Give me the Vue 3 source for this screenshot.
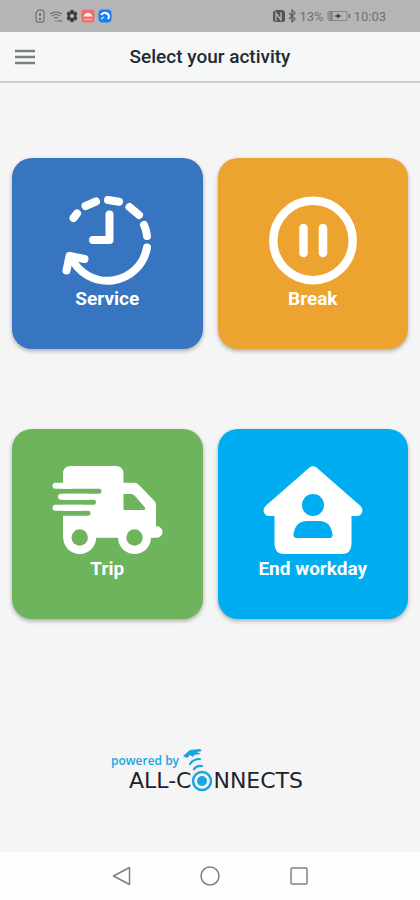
<template>
  <div class="screen">
    <div class="status-bar">
      <div class="status-group">
        <svg class="status-icon" viewBox="0 0 12 14" fill="none" stroke="#606060">
          <path d="M2 4l2-3h5l1 1v10l-1 1H3l-1-1z" />
          <path d="M6 4v3M6 9v2" stroke-width="1.5" />
        </svg>
        <svg class="status-icon wide" viewBox="0 0 14 14" fill="none" stroke="#686868" stroke-width="1.2">
          <path d="M1 5q6-4 12 0M3 7q4-3 8 0M5 9q2-1 4 0M6 12h2M10 11v2M12 11v2" />
        </svg>
        <svg class="status-icon" viewBox="0 0 12 14">
          <path
            d="M4.500 1h3l.5 2 2-.5L11.500 5 10 7l1.500 2-1.500 2.500-2-.5-.5 2h-3L4 11l-2 .5L.5 9 2 7 .5 5 2 2.500l2 .5z"
            fill="#3d3d3d"
          />
          <circle cx="6" cy="7" r="2" fill="#b5b5b5" />
        </svg>
        <svg class="status-icon wide" viewBox="0 0 14 14">
          <rect x="0.5" y="0.5" width="13" height="13" rx="3" fill="#f0706c" />
          <path d="M3 8q0-4 4-4t4 4l-2-1-2 1-2-1z" fill="#fff" />
          <path d="M3 10.500h8" stroke="#f8b5b2" />
        </svg>
        <svg class="status-icon wide" viewBox="0 0 14 14">
          <rect x="0.5" y="0.5" width="13" height="13" rx="4" fill="#167ff5" />
          <path d="M3 6q2-3 5-2 3 1 3 4l-1 2" fill="none" stroke="#fff" stroke-width="2" />
          <path d="M3 10l3-2" fill="none" stroke="#c9e2ff" stroke-width="1.5" />
        </svg>
      </div>
      <div class="status-group right">
        <svg class="status-icon" viewBox="0 0 12 14">
          <path d="M0 3l3-2h7l2 2v9l-2 1H3l-3-1z" fill="#555" />
          <path d="M3 12V4l5 7V3" fill="none" stroke="#b5b5b5" stroke-width="1.3" />
        </svg>
        <svg class="status-icon narrow" viewBox="0 0 8 14" fill="none" stroke="#606060" stroke-width="1.3">
          <path d="M1 4l6 6-3 3V1l3 3-6 6" />
        </svg>
        <span>13%</span>
        <svg class="battery" viewBox="0 0 24 12">
          <rect x="1" y="1.5" width="19" height="9" rx="1" fill="none" stroke="#858585" />
          <rect x="2" y="2" width="4" height="8" fill="#8c8c8c" />
          <path d="M7 6l3-1 1-2 1 2 3 1-3 1-1 2-1-2z" fill="#444" />
          <path d="M22.500 4v4" stroke="#777" stroke-width="2" />
        </svg>
        <span>10:03</span>
      </div>
    </div>

    <header class="app-bar">
      <button class="menu" aria-label="Menu">
        <svg viewBox="0 0 20 16" stroke="#7b7f82" stroke-width="2.5">
          <path d="M0 2h20M0 8h20M0 14h20" />
        </svg>
      </button>
      <h1>Select your activity</h1>
    </header>

    <main>
      <div class="activities">
        <button
          v-for="activity in activities"
          :key="activity.id"
          class="card"
          :class="[activity.id, { selected: selected === activity.id }]"
          @click="selected = activity.id"
        >
          <svg v-if="activity.id === 'service'" class="icon" viewBox="0 0 110 88">
            <g fill="none" stroke="#fff" stroke-width="8" stroke-linecap="round" stroke-linejoin="round">
              <path d="M95 51.500A40 40 0 0 1 19 61" />
              <path d="M14.500 74.500L17.500 60l15 3" />
              <path d="M57.500 18.500V44H41" />
              <path d="M21.500 22l3.500-4.500M33.500 10L44 5.500M56 4l11 1.700M77.500 11l9.500 8M92 29q2.500 5 3 11" />
            </g>
          </svg>

          <svg v-else-if="activity.id === 'break'" class="icon" viewBox="0 0 110 88">
            <g fill="none" stroke="#fff" stroke-linecap="round">
              <circle cx="55" cy="44.5" r="39.7" stroke-width="8.5" />
              <path d="M45.500 32v25M65 32v25" stroke-width="8.5" />
            </g>
          </svg>

          <svg v-else-if="activity.id === 'trip'" class="icon" viewBox="0 0 110 88">
            <g fill="#fff">
              <path
                d="M11 71.700V8Q11 0 19 0H63.500Q71.500 0 71.500 8V16.700H82Q85 16.700 87 19L102 34.500Q104 36.500 104 39V60.300A5.700 5.700 0 0 1 105.500 71.700Z"
              />
              <circle cx="27.7" cy="71.5" r="16.5" />
              <circle cx="82.5" cy="71.5" r="16.5" />
            </g>
            <path d="M71.500 28H79Q81 28 82.500 29.500L92.500 41Q94.500 44 91.500 44H71.500Z" fill="#6db45c" />
            <g fill="#6db45c">
              <circle cx="27.7" cy="71.5" r="8.2" />
              <circle cx="82.5" cy="71.5" r="8.2" />
            </g>
            <g fill="none" stroke-linecap="round">
              <path d="M9 25.200H47M9 36.200H41.500M9 47.200H36" stroke="#6db45c" stroke-width="5" />
              <path d="M3.500 19.700H20M9 30.700H36M3.500 41.700H30" stroke="#fff" stroke-width="6" />
            </g>
          </svg>

          <svg v-else class="icon" viewBox="0 0 110 88">
            <path
              d="M51.500 1.500Q55 -1 58.500 1.500L102 39.500Q105.500 43 104 46.500 102.500 50 98.500 50H93.500V78Q93.500 88 83.500 88H26.500Q16.500 88 16.500 78V50H11.500Q7.500 50 6 46.500 4.500 43 8 39.500Z"
              fill="#fff"
            />
            <circle cx="55" cy="39" r="11" fill="#00adf0" />
            <path d="M35.500 69Q37 55 49 55H61Q73 55 74.500 69 74.500 72 71.500 72H38.500Q35.500 72 35.500 69Z" fill="#00adf0" />
          </svg>

          <span>{{ activity.label }}</span>
        </button>
      </div>

      <footer class="brand">
        <div class="powered">
          <span>powered by</span>
          <svg class="signal" viewBox="0 0 24 24">
            <path d="M0 8L7 2 17 1 19 3 14 4 18 6 11 7 10 9 7 7 4 10Z" fill="#19a5e1" />
            <g fill="none" stroke="#19a5e1" stroke-width="2.2" stroke-linecap="round">
              <path d="M7 16q3-5 10-5M11 21q3-4 8-3" />
            </g>
          </svg>
        </div>
        <div class="wordmark">
          <span>ALL-C</span>
          <svg class="target" viewBox="0 0 22 22">
            <circle cx="11" cy="11" r="9" fill="none" stroke="#19a5e1" stroke-width="2.5" />
            <circle cx="11" cy="11" r="5" fill="#19a5e1" />
          </svg>
          <span>NNECTS</span>
        </div>
      </footer>
    </main>

    <nav class="system-nav">
      <button aria-label="Back">
        <svg viewBox="0 0 20 20"><path d="M18.500 1.500v17L2.500 10z" /></svg>
      </button>
      <button aria-label="Home">
        <svg viewBox="0 0 20 20"><circle cx="10" cy="10" r="9" /></svg>
      </button>
      <button aria-label="Recent apps">
        <svg viewBox="0 0 20 20"><rect x="2" y="2" width="16" height="16" rx="1" /></svg>
      </button>
    </nav>
  </div>
</template>

<script setup>
import { ref } from "vue";

const selected = ref(null);

const activities = [
  { id: "service", label: "Service" },
  { id: "break", label: "Break" },
  { id: "trip", label: "Trip" },
  { id: "workday", label: "End workday" },
];
</script>

<style>
body {
  margin: 0;
  background: #f5f5f5;
}
</style>

<style scoped>
.screen {
  display: flex;
  flex-direction: column;
  min-height: 100vh;
  background: #f5f5f5;
  font-family: Roboto, "Liberation Sans", sans-serif;
}

button {
  border: 0;
  padding: 0;
  background: none;
  font-family: inherit;
  cursor: pointer;
}

svg {
  display: block;
}

.status-bar {
  display: flex;
  justify-content: space-between;
  align-items: center;
  height: 32px;
  padding: 0 34px;
  background: #b5b5b5;
  color: #707070;
  font-size: 13px;
}

.status-group {
  display: flex;
  align-items: center;
  gap: 3px;
}

.status-icon {
  width: 12px;
  height: 14px;
}

.status-icon.wide {
  width: 14px;
}

.status-icon.narrow {
  width: 8px;
}

.battery {
  width: 24px;
  height: 12px;
}

.app-bar {
  display: grid;
  grid-template-columns: 1fr auto 1fr;
  align-items: center;
  box-sizing: border-box;
  height: 51px;
  padding: 0 15px;
  background: #f6f7f7;
  border-bottom: 2px solid #cfcfcf;
}

.menu {
  justify-self: start;
}

.menu svg {
  width: 20px;
  height: 16px;
}

h1 {
  margin: 0;
  color: #202a32;
  font-size: 19px;
  font-weight: 500;
  line-height: 24px;
}

main {
  display: flex;
  flex: 1;
  flex-direction: column;
  justify-content: space-between;
  padding: 75px 12px 60px;
}

.activities {
  display: grid;
  grid-template-columns: 1fr 1fr;
  gap: 80px 15px;
}

.card {
  display: flex;
  flex-direction: column;
  align-items: center;
  justify-content: center;
  aspect-ratio: 1;
  padding-top: 3px;
  box-sizing: border-box;
  border-radius: 20px;
  box-shadow: 0 2px 4px rgba(0, 0, 0, 0.3);
  color: #fff;
  font-size: 19px;
  font-weight: 700;
  line-height: 30px;
}

.card.selected {
  filter: brightness(0.9);
}

.service {
  background: #3775c0;
}

.break {
  background: #eca32f;
}

.trip {
  background: #6db45c;
}

.workday {
  background: #00adf0;
}

.icon {
  width: 110px;
  height: 88px;
  overflow: visible;
}

.brand {
  display: flex;
  flex-direction: column;
  align-self: center;
  padding-right: 6px;
}

.powered {
  display: flex;
  align-items: center;
  gap: 4px;
  height: 20px;
  color: #19a5e1;
  font-family: "Open Sans", sans-serif;
  font-size: 12px;
  font-weight: 600;
}

.signal {
  width: 24px;
  height: 24px;
}

.wordmark {
  display: flex;
  align-items: center;
  padding-left: 18px;
  color: #1d222b;
  font-family: "DejaVu Sans", sans-serif;
  font-size: 22px;
  line-height: 20px;
}

.target {
  width: 22px;
  height: 22px;
}

.system-nav {
  display: flex;
  justify-content: space-around;
  align-items: center;
  height: 48px;
  padding: 0 76px;
  background: #fdfdfd;
}

.system-nav svg {
  width: 20px;
  height: 20px;
  fill: none;
  stroke: #808080;
  stroke-width: 1.5;
  stroke-linejoin: round;
}
</style>
